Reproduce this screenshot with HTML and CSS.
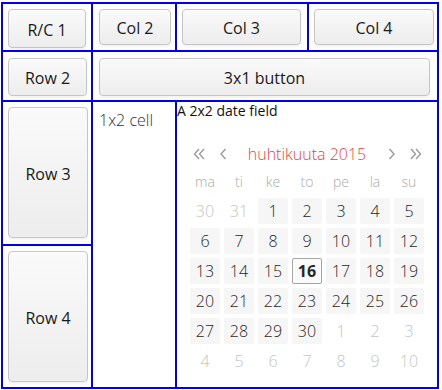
FILE: index.html
```html
<!DOCTYPE html>
<html lang="fi">
    <head>
        <title>GridLayout</title>
        <meta http-equiv="content-type" content="text/html; charset=UTF-8" />
        <link rel="stylesheet" href="styles.css">
    </head>

    <body>
        <div class="layout">
            <div class="cell c-rc1"><button class="btn rc1">R/C 1</button></div>
            <div class="cell c-col2"><button class="btn short">Col 2</button></div>
            <div class="cell c-col3"><button class="btn short">Col 3</button></div>
            <div class="cell c-col4"><button class="btn short">Col 4</button></div>

            <div class="cell c-row2"><button class="btn mid">Row 2</button></div>
            <div class="cell c-wide"><button class="btn mid wide">3x1 button</button></div>

            <div class="cell c-row3"><button class="btn tall">Row 3</button></div>
            <div class="cell c-row4"><button class="btn tall">Row 4</button></div>

            <div class="cell c-label"><span class="label">1x2 cell</span></div>

            <div class="cell c-date">
                <div class="caption">A 2x2 date field</div>
                <div class="calendar">
                    <div class="cal-head">
                        <span class="nav">
                            <svg width="12" height="12" viewBox="0 0 12 12"><path d="M6 1 L1.5 6 L6 11 M11 1 L6.5 6 L11 11" /></svg>
                        </span>
                        <span class="nav">
                            <svg width="8" height="12" viewBox="0 0 8 12"><path d="M6.5 1 L2 6 L6.5 11" /></svg>
                        </span>
                        <span class="month">huhtikuuta 2015</span>
                        <span class="nav">
                            <svg width="8" height="12" viewBox="0 0 8 12"><path d="M1.5 1 L6 6 L1.5 11" /></svg>
                        </span>
                        <span class="nav">
                            <svg width="12" height="12" viewBox="0 0 12 12"><path d="M1 1 L5.5 6 L1 11 M6 1 L10.5 6 L6 11" /></svg>
                        </span>
                    </div>
                    <div class="weekdays">
                        <span>ma</span><span>ti</span><span>ke</span><span>to</span><span>pe</span><span>la</span><span>su</span>
                    </div>
                    <div class="days">
                        <span class="other">30</span><span class="other">31</span><span class="day">1</span><span class="day">2</span><span class="day">3</span><span class="day">4</span><span class="day">5</span>
                        <span class="day">6</span><span class="day">7</span><span class="day">8</span><span class="day">9</span><span class="day">10</span><span class="day">11</span><span class="day">12</span>
                        <span class="day">13</span><span class="day">14</span><span class="day">15</span><span class="day today">16</span><span class="day">17</span><span class="day">18</span><span class="day">19</span>
                        <span class="day">20</span><span class="day">21</span><span class="day">22</span><span class="day">23</span><span class="day">24</span><span class="day">25</span><span class="day">26</span>
                        <span class="day">27</span><span class="day">28</span><span class="day">29</span><span class="day">30</span><span class="other">1</span><span class="other">2</span><span class="other">3</span>
                        <span class="other">4</span><span class="other">5</span><span class="other">6</span><span class="other">7</span><span class="other">8</span><span class="other">9</span><span class="other">10</span>
                    </div>
                </div>
            </div>
        </div>
    </body>
</html>
```

FILE: styles.css
```css
html, body, button {
    font-family: "Open Sans", sans-serif;
}
body {
    margin: 0;
    background: white;
}

.layout {
    display: grid;
    grid-template-columns: 88px 82px 130px 128px;
    grid-template-rows: 46px 48px 142px 141px;
    gap: 2px;
    padding: 2px;
    width: 434px;
    margin: 2px 0 0 1px;
    background: #0000f0;
}
.cell {
    background: white;
    display: flex;
    align-items: flex-start;
    box-sizing: border-box;
}

.c-rc1  { grid-column: 1; grid-row: 1; padding: 5px 5px 0 5px; }
.c-col2 { grid-column: 2; grid-row: 1; padding: 5px 4px 0 6px; }
.c-col3 { grid-column: 3; grid-row: 1; padding: 5px 6px 0 5px; }
.c-col4 { grid-column: 4; grid-row: 1; padding: 5px 3px 0 5px; }
.c-row2 { grid-column: 1; grid-row: 2; padding: 6px 4px 0 5px; }
.c-wide { grid-column: 2 / 5; grid-row: 2; padding: 6px 7px 0 6px; }
.c-row3 { grid-column: 1; grid-row: 3; padding: 5px 3px 0 5px; }
.c-row4 { grid-column: 1; grid-row: 4; padding: 5px 3px 0 5px; }
.c-label { grid-column: 2; grid-row: 3 / 5; padding: 7px 0 0 6px; }
.c-date {
    grid-column: 3 / 5;
    grid-row: 3 / 5;
    flex-direction: column;
    align-items: stretch;
}

.btn {
    width: 100%;
    margin: 0;
    padding: 2px 0 0;
    border: 1px solid #c5c5c5;
    border-radius: 4px;
    background: linear-gradient(#fafafa, #ededed);
    box-shadow: inset 0 1px 0 white, 0 2px 3px rgba(0, 0, 0, 0.05);
    color: #191919;
    font-size: 16px;
}
.rc1 { height: 39px; }
.short { height: 36px; }
.mid { height: 38px; }
.tall { height: 131px; }

.label {
    font-size: 16px;
    font-weight: 300;
    color: #333;
    line-height: 22px;
}

.caption {
    font-size: 14px;
    line-height: 18px;
    color: #111;
}

.calendar {
    width: 234px;
    margin: 22px auto 0;
    font-weight: 300;
}
.cal-head {
    display: grid;
    grid-template-columns: 17px 31px 1fr 31px 17px;
    height: 24px;
    align-items: center;
}
.nav {
    display: flex;
    justify-content: center;
    align-items: center;
}
.nav path {
    fill: none;
    stroke: #9a9a9a;
    stroke-width: 1.4;
}
.month {
    text-align: center;
    color: #ee4040;
    font-size: 16px;
}

.weekdays {
    display: grid;
    grid-template-columns: repeat(7, 30px);
    column-gap: 4px;
    margin-top: 6px;
    height: 20px;
    line-height: 20px;
    text-align: center;
    font-size: 14px;
    color: #aaa;
}

.days {
    display: grid;
    grid-template-columns: repeat(7, 30px);
    grid-auto-rows: 26px;
    gap: 4px;
    margin-top: 6px;
}
.days span {
    display: flex;
    justify-content: center;
    align-items: center;
    font-size: 16px;
    border-radius: 2px;
    box-sizing: border-box;
}
.day {
    background: #f6f6f6;
    color: #262626;
}
.other {
    color: #c4c4c4;
}
.today {
    border: 1px solid #a6a6a6;
    background: #fafafa;
    font-weight: 700;
}
```
